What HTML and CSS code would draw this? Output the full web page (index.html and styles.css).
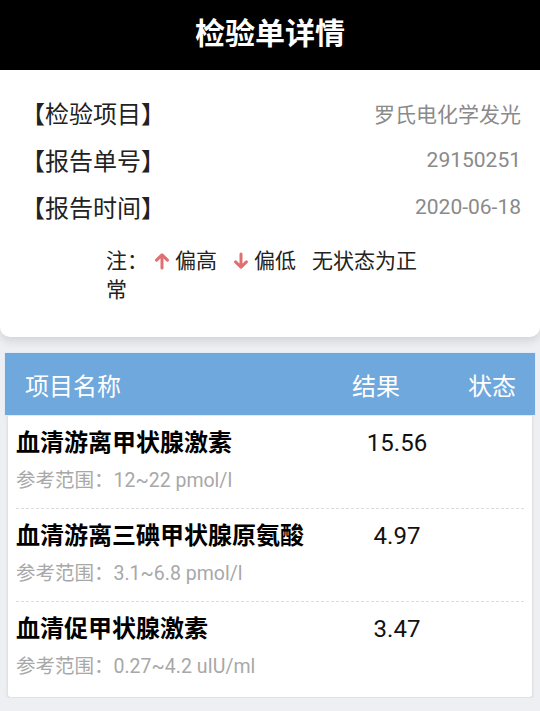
FILE: index.html
```html
<!DOCTYPE html>
<html lang="zh-CN">
<head>
    <meta charset="UTF-8">
    <meta name="viewport" content="width=device-width, initial-scale=1.0">
    <title>检验单详情</title>
    <link rel="stylesheet" href="styles.css">
</head>
<body>
    <!-- 顶部标题 -->
    <header class="top-bar">检验单详情</header>

    <!-- 基本信息 -->
    <section class="info-card">
        <div class="info-row">
            <span class="info-label">【检验项目】</span>
            <span class="info-value">罗氏电化学发光</span>
        </div>
        <div class="info-row">
            <span class="info-label">【报告单号】</span>
            <span class="info-value">29150251</span>
        </div>
        <div class="info-row">
            <span class="info-label">【报告时间】</span>
            <span class="info-value">2020-06-18</span>
        </div>

        <p class="note">注：<svg class="arrow" viewBox="0 0 24 24"><path d="M12 20.5V5 M5.5 11L12 4.5L18.5 11"/></svg><span class="note-text">偏高</span><svg class="arrow arrow-gap" viewBox="0 0 24 24"><path d="M12 3.5V19 M5.5 13L12 19.5L18.5 13"/></svg><span class="note-text">偏低</span><span class="note-normal">无状态为正常</span></p>
    </section>

    <!-- 检验结果 -->
    <section class="result-table">
        <div class="table-head">
            <span class="head-name">项目名称</span>
            <span class="head-result">结果</span>
            <span class="head-status">状态</span>
        </div>

        <div class="table-body">
            <div class="result-row">
                <div class="row-main">
                    <span class="item-name">血清游离甲状腺激素</span>
                    <span class="item-value">15.56</span>
                    <span class="item-status"></span>
                </div>
                <div class="item-range">参考范围：12~22 pmol/l</div>
            </div>
            <div class="result-row">
                <div class="row-main">
                    <span class="item-name">血清游离三碘甲状腺原氨酸</span>
                    <span class="item-value">4.97</span>
                    <span class="item-status"></span>
                </div>
                <div class="item-range">参考范围：3.1~6.8 pmol/l</div>
            </div>
            <div class="result-row">
                <div class="row-main">
                    <span class="item-name">血清促甲状腺激素</span>
                    <span class="item-value">3.47</span>
                    <span class="item-status"></span>
                </div>
                <div class="item-range">参考范围：0.27~4.2 uIU/ml</div>
            </div>
        </div>
    </section>
</body>
</html>
```

FILE: styles.css
```css
body {
    font-family: 'Roboto', 'Noto Sans CJK SC', sans-serif;
    background-color: #eeeff3;
    margin: 0;
    color: #222;
}

.top-bar {
    height: 70px;
    line-height: 68px;
    background-color: #000;
    color: #fff;
    text-align: center;
    font-size: 30px;
    font-weight: bold;
}

.info-card {
    background-color: #fff;
    border-radius: 0 0 10px 10px;
    padding: 19px 19px 32px 21px;
    box-shadow: 0 4px 10px rgba(0, 0, 0, 0.12);
}

.info-row {
    display: flex;
    justify-content: space-between;
    align-items: center;
    height: 47px;
}

.info-label {
    font-size: 24px;
    color: #222;
}

.info-value {
    font-size: 21px;
    color: #8a8a8a;
}

.note {
    width: 330px;
    margin: 17px auto 0;
    font-size: 21px;
    line-height: 29px;
    color: #222;
}

.arrow {
    width: 20px;
    height: 20px;
    margin-left: 4px;
    vertical-align: -3px;
    fill: none;
    stroke: #e07070;
    stroke-width: 3.6;
    stroke-linecap: round;
    stroke-linejoin: round;
}

.arrow-gap {
    margin-left: 14px;
}

.note-text {
    margin-left: 3px;
}

.note-normal {
    margin-left: 16px;
}

.result-table {
    margin: 15px 4px 0;
}

.table-head {
    display: flex;
    align-items: center;
    height: 62px;
    padding: 0 19px 0 20px;
    background-color: #6fa8dc;
    color: #fff;
    font-size: 24px;
    border: 1px solid #e3ecf6;
}

.head-name {
    flex: 1;
}

.head-status {
    margin-left: 68px;
}

.table-body {
    margin: 0 3px;
    background-color: #fff;
    border: 1px solid #e2e2e2;
    border-top: none;
    border-radius: 0 0 4px 4px;
    box-shadow: 0 1px 3px rgba(0, 0, 0, 0.08);
}

.result-row {
    margin: 0 8px;
    padding: 11px 0 14px;
    border-bottom: 1px dashed #dcdcdc;
}

.result-row:last-child {
    border-bottom: none;
    padding-bottom: 17px;
}

.row-main {
    display: grid;
    grid-template-columns: 1fr 120px 67px;
    align-items: center;
    line-height: 32px;
}

.item-name {
    font-size: 24px;
    font-weight: bold;
    color: #000;
}

.item-value {
    font-size: 24px;
    color: #111;
    text-align: center;
}

.item-range {
    margin-top: 9px;
    font-size: 19.5px;
    line-height: 26px;
    color: #a8a8a8;
}
```
